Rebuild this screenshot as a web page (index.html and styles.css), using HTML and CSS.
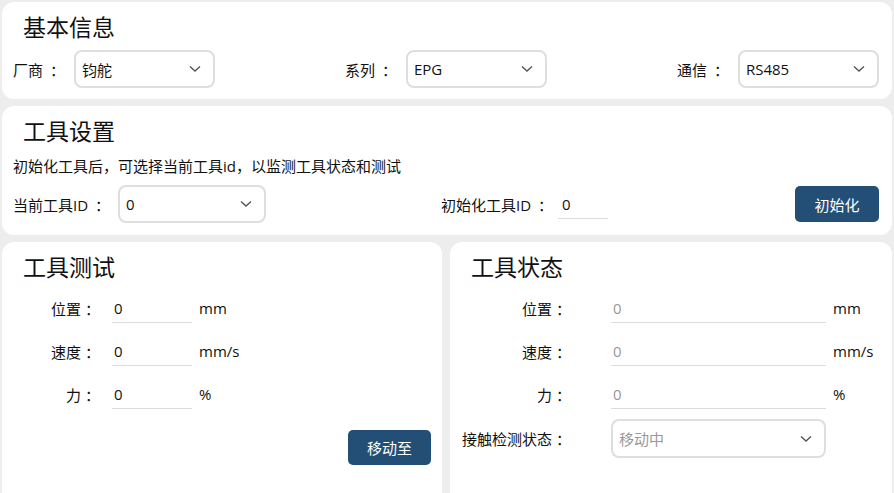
FILE: index.html
```html
<!DOCTYPE html>
<html lang="zh-CN">
<head>
    <meta charset="UTF-8">
    <meta name="viewport" content="width=device-width, initial-scale=1.0">
    <title>工具设置</title>
    <link rel="stylesheet" href="styles.css">
</head>
<body>
    <main class="page">
        <section class="card card-basic">
            <h2 class="card-title">基本信息</h2>
            <div class="basic-row">
                <div class="field">
                    <span class="label">厂商 <span class="colon">：</span></span>
                    <div class="select select-basic">
                        <span>钧舵</span>
                        <svg class="chevron" width="12" height="8" viewBox="0 0 12 8"><path d="M1 1.5 L6 6 L11 1.5" fill="none" stroke="#555" stroke-width="1.4"/></svg>
                    </div>
                </div>
                <div class="field">
                    <span class="label">系列 <span class="colon">：</span></span>
                    <div class="select select-basic">
                        <span>EPG</span>
                        <svg class="chevron" width="12" height="8" viewBox="0 0 12 8"><path d="M1 1.5 L6 6 L11 1.5" fill="none" stroke="#555" stroke-width="1.4"/></svg>
                    </div>
                </div>
                <div class="field">
                    <span class="label">通信 <span class="colon">：</span></span>
                    <div class="select select-basic">
                        <span>RS485</span>
                        <svg class="chevron" width="12" height="8" viewBox="0 0 12 8"><path d="M1 1.5 L6 6 L11 1.5" fill="none" stroke="#555" stroke-width="1.4"/></svg>
                    </div>
                </div>
            </div>
        </section>

        <section class="card card-tool">
            <h2 class="card-title">工具设置</h2>
            <p class="desc">初始化工具后，可选择当前工具id，以监测工具状态和测试</p>
            <div class="tool-row">
                <div class="field">
                    <span class="label">当前工具ID <span class="colon">：</span></span>
                    <div class="select select-tool">
                        <span>0</span>
                        <svg class="chevron" width="12" height="8" viewBox="0 0 12 8"><path d="M1 1.5 L6 6 L11 1.5" fill="none" stroke="#555" stroke-width="1.4"/></svg>
                    </div>
                </div>
                <div class="field">
                    <span class="label">初始化工具ID <span class="colon">：</span></span>
                    <input class="line-input init-input" type="text" value="0">
                </div>
                <button class="btn btn-init">初始化</button>
            </div>
        </section>

        <div class="bottom-row">
            <section class="card card-test">
                <h2 class="card-title">工具测试</h2>
                <div class="form form-test">
                    <span class="flabel">位置 <span class="colon">：</span></span>
                    <input class="line-input" type="text" value="0">
                    <span class="unit">mm</span>

                    <span class="flabel">速度 <span class="colon">：</span></span>
                    <input class="line-input" type="text" value="0">
                    <span class="unit">mm/s</span>

                    <span class="flabel">力 <span class="colon">：</span></span>
                    <input class="line-input" type="text" value="0">
                    <span class="unit">%</span>
                </div>
                <div class="actions">
                    <button class="btn btn-move">移动至</button>
                </div>
            </section>

            <section class="card card-status">
                <h2 class="card-title">工具状态</h2>
                <div class="form form-status">
                    <span class="flabel">位置 <span class="colon">：</span></span>
                    <input class="line-input readonly" type="text" value="0" readonly>
                    <span class="unit">mm</span>

                    <span class="flabel">速度 <span class="colon">：</span></span>
                    <input class="line-input readonly" type="text" value="0" readonly>
                    <span class="unit">mm/s</span>

                    <span class="flabel">力 <span class="colon">：</span></span>
                    <input class="line-input readonly" type="text" value="0" readonly>
                    <span class="unit">%</span>

                    <span class="flabel flabel-select">接触检测状态 <span class="colon">：</span></span>
                    <div class="select select-status">
                        <span class="placeholder">移动中</span>
                        <svg class="chevron" width="12" height="8" viewBox="0 0 12 8"><path d="M1 1.5 L6 6 L11 1.5" fill="none" stroke="#555" stroke-width="1.4"/></svg>
                    </div>
                    <span></span>
                </div>
            </section>
        </div>
    </main>
</body>
</html>
```

FILE: styles.css
```css
html, body {
    height: 100%;
    overflow: hidden;
}

body {
    margin: 0;
    padding: 0;
    background-color: #ededed;
    color: #111;
    font-family: "Open Sans", "Noto Sans CJK SC", sans-serif;
    font-size: 15px;
}

.page {
    display: flex;
    flex-direction: column;
    gap: 7px;
    padding: 2px;
}

.card {
    background-color: #fff;
    border-radius: 12px;
    padding: 10px 13px 11px 11px;
}

.card-title {
    margin: 0;
    padding-left: 10px;
    font-size: 23px;
    font-weight: normal;
    line-height: 30px;
    color: #111;
}

.field {
    display: flex;
    align-items: center;
}

.label {
    white-space: nowrap;
}

/* centred full-width colon */
.colon {
    font-family: "Noto Sans CJK JP", "Noto Sans CJK SC", sans-serif;
    margin-left: 3px;
}

/* selects */
.select {
    display: flex;
    align-items: center;
    justify-content: space-between;
    box-sizing: border-box;
    border: 2px solid #dedede;
    border-radius: 8px;
    padding: 0 12px 0 6px;
    background-color: #fff;
}

.chevron {
    flex-shrink: 0;
}

.placeholder {
    color: #999;
}

/* basic info */
.basic-row {
    display: flex;
    justify-content: space-between;
    margin-top: 8px;
}

.basic-row .label {
    margin-right: 9px;
}

.select-basic {
    width: 141px;
    height: 38px;
}

/* tool settings */
.card-tool {
    padding-bottom: 12px;
}

.desc {
    margin: 10px 0 0 0;
    line-height: 20px;
}

.tool-row {
    display: grid;
    grid-template-columns: 428px auto 1fr;
    align-items: center;
    margin-top: 9px;
}

.tool-row .label {
    margin-right: 8px;
}

.tool-row .field + .field .label {
    margin-right: 5px;
}

.select-tool {
    width: 148px;
    height: 38px;
}

.line-input {
    box-sizing: border-box;
    width: 80px;
    height: 30px;
    border: none;
    border-bottom: 1px solid #dcdcdc;
    padding: 0 2px;
    font: inherit;
    color: #111;
    background: transparent;
    outline: none;
}

.line-input.readonly {
    color: #999;
}

.init-input {
    width: 50px;
    padding: 0 4px;
}

.btn {
    border: none;
    border-radius: 5px;
    background-color: #234f76;
    color: #fff;
    font: inherit;
    cursor: pointer;
}

.btn-init {
    justify-self: end;
    width: 84px;
    height: 36px;
}

/* bottom cards */
.bottom-row {
    display: grid;
    grid-template-columns: 440px 1fr;
    gap: 8px;
}

.bottom-row .card {
    min-height: 290px;
    padding-right: 11px;
}

.form {
    display: grid;
    align-items: center;
    row-gap: 13px;
    margin-top: 11px;
}

.flabel {
    text-align: right;
    white-space: nowrap;
}

.flabel .colon {
    margin-left: 0;
}

.unit {
    padding-left: 7px;
}

.form-test {
    grid-template-columns: 87px 80px auto;
    column-gap: 0;
}

.form-test .line-input {
    margin-left: 12px;
}

.form-test .unit {
    padding-left: 19px;
}

.form-status {
    grid-template-columns: 110px 1fr 55px;
    column-gap: 0;
}

.form-status .line-input {
    width: auto;
    margin-left: 40px;
}

.form-status .flabel-select {
    margin-top: -3px;
}

.select-status {
    height: 39px;
    margin-left: 40px;
    margin-top: -3px;
}

.actions {
    display: flex;
    justify-content: flex-end;
    margin-top: 21px;
}

.btn-move {
    width: 83px;
    height: 35px;
}
```
